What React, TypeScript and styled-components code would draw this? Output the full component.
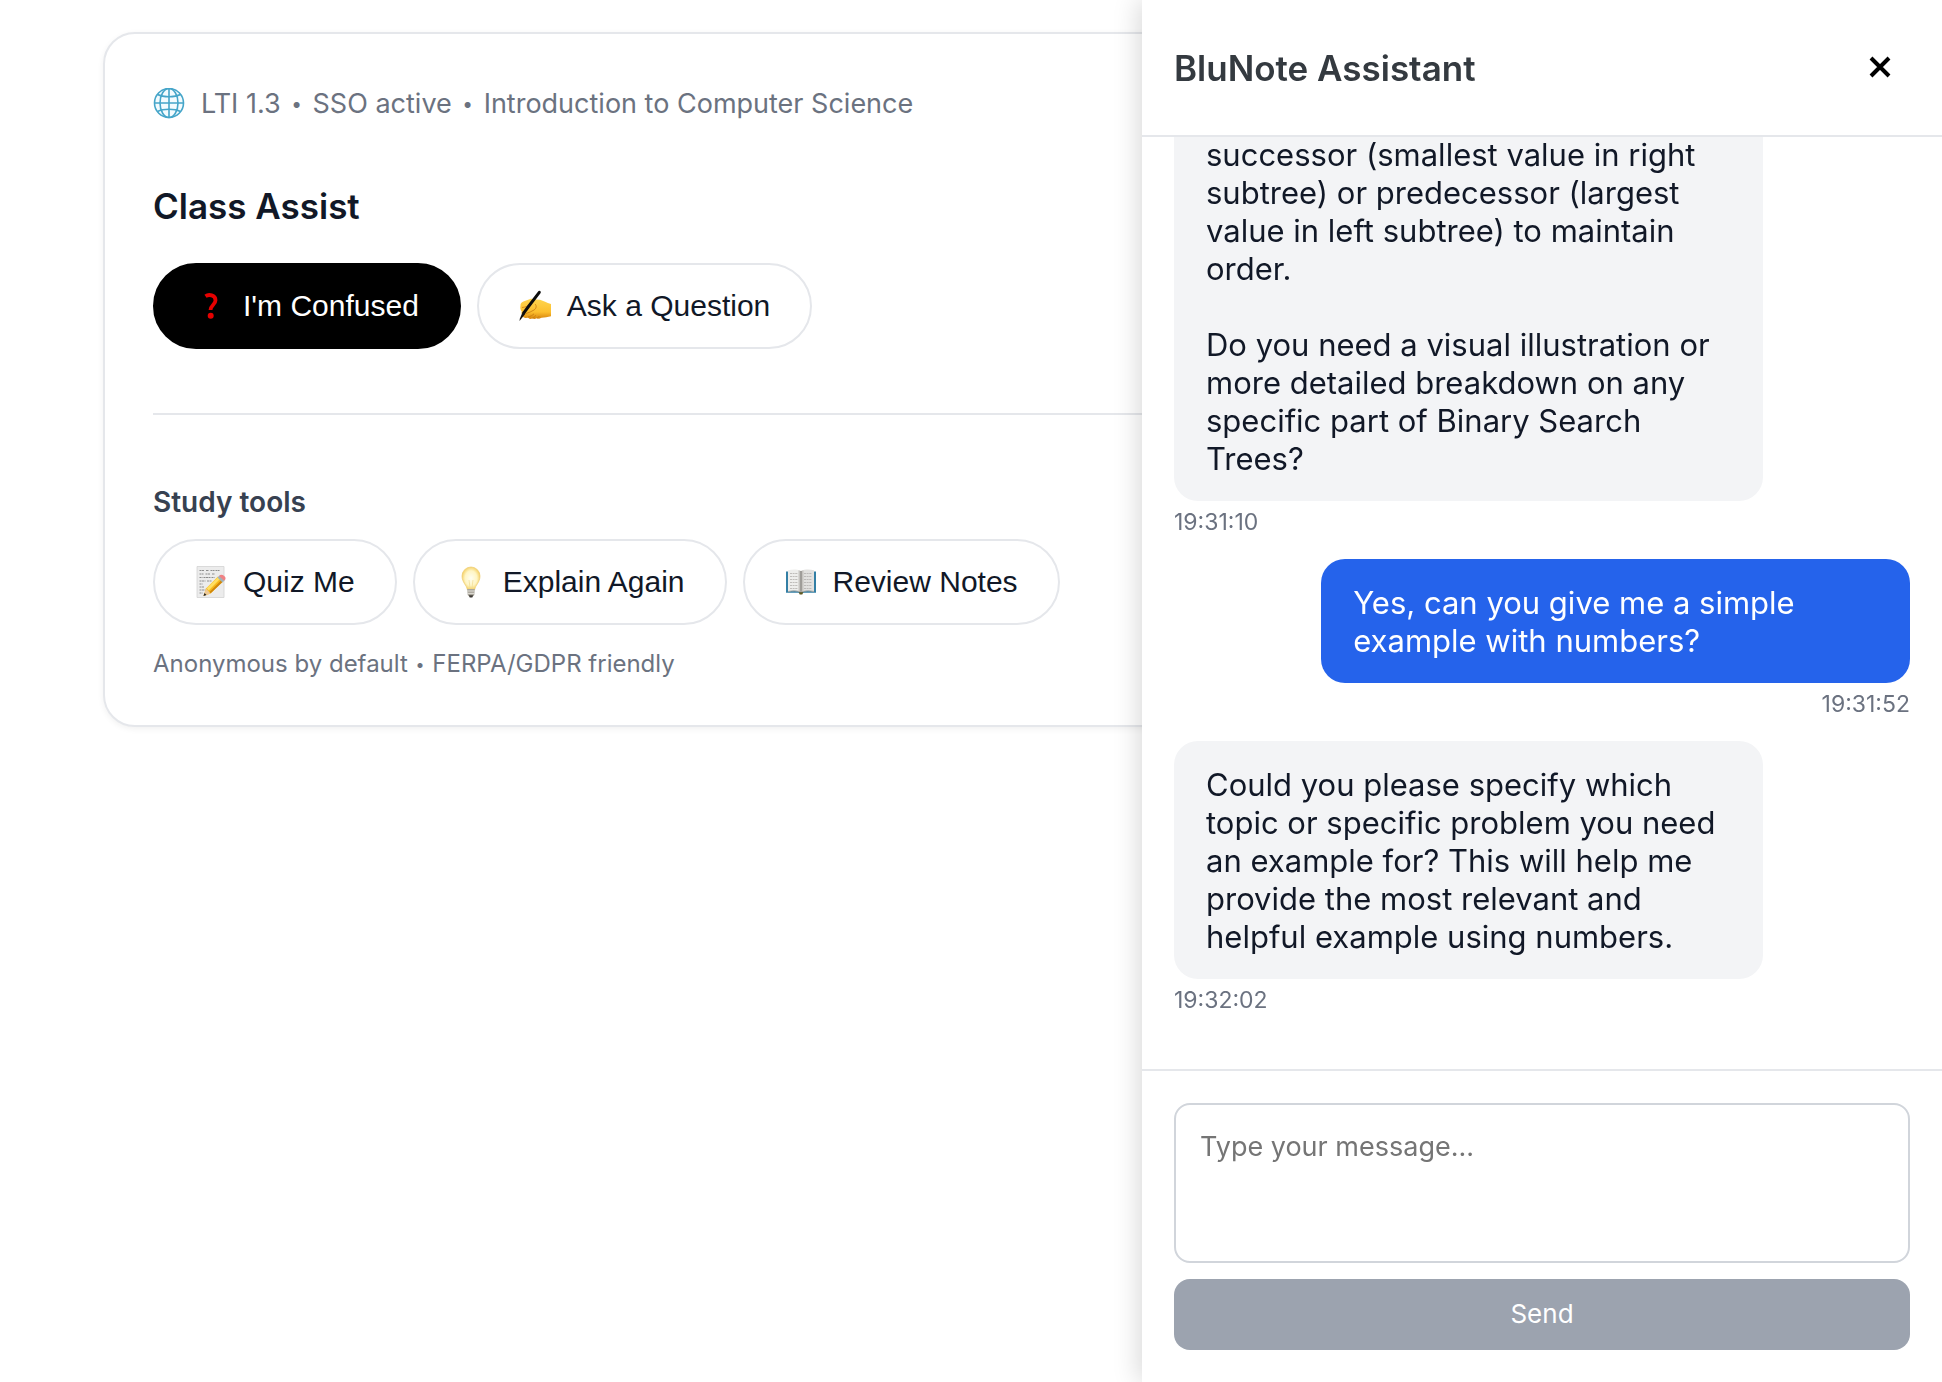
import React from "react";
import styled, { createGlobalStyle } from "styled-components";

const GlobalStyle = createGlobalStyle`
  *, *::before, *::after { box-sizing: border-box; }
  body {
    margin: 0;
    background: #ffffff;
    color: #111827;
    font-family: Inter, "Liberation Sans", sans-serif;
  }
  h1, h2, h3, p { margin: 0; }
`;

const Page = styled.main`
  padding: 32px 103px;
`;

const Card = styled.section`
  display: flex;
  flex-direction: column;
  padding: 48px 48px 46px;
  border: 2px solid #e5e7eb;
  border-radius: 32px;
  background: #ffffff;
  box-shadow: 0 2px 6px rgba(0, 0, 0, 0.06);
`;

const CourseLine = styled.p`
  display: flex;
  align-items: center;
  gap: 16px;
  margin-bottom: 56px;
  font-size: 27px;
  line-height: 44px;
  color: #6b7280;
`;

const Dot = styled.span<{ $small?: boolean }>`
  margin: 0 ${(p) => (p.$small ? 1 : 3)}px;
  font-size: ${(p) => (p.$small ? 16 : 19)}px;
  line-height: 1;
  vertical-align: 2px;
`;

const CardTitle = styled.h1`
  margin-bottom: 32px;
  font-size: 35px;
  line-height: 49px;
  font-weight: 600;
  color: #111827;
`;

const SectionTitle = styled.h2`
  margin-bottom: 14px;
  font-size: 28px;
  line-height: 46px;
  font-weight: 600;
  color: #374151;
`;

const ButtonRow = styled.div`
  display: flex;
  flex-wrap: wrap;
  gap: 16px;
`;

const PillButton = styled.button<{ $primary?: boolean }>`
  display: inline-flex;
  align-items: center;
  gap: 16px;
  padding: 24px 40px;
  border: 2px solid ${(p) => (p.$primary ? "#000000" : "#e5e7eb")};
  border-radius: 43px;
  background: ${(p) => (p.$primary ? "#000000" : "#ffffff")};
  color: ${(p) => (p.$primary ? "#ffffff" : "#111827")};
  font-family: "Liberation Sans", Arial, sans-serif;
  font-size: 30px;
  line-height: 34px;
  cursor: pointer;
`;

const Glyph = styled.svg`
  display: block;
  flex: none;
  width: 32px;
  height: 32px;
`;

const Divider = styled.hr`
  width: 100%;
  height: 2px;
  margin: 64px 0;
  border: 0;
  background: #e5e7eb;
`;

const Note = styled.p`
  margin-top: 24px;
  font-size: 24px;
  line-height: 30px;
  color: #6b7280;
`;

const Drawer = styled.aside`
  position: fixed;
  top: 0;
  right: 0;
  bottom: 0;
  display: flex;
  flex-direction: column;
  width: 800px;
  max-width: 100%;
  background: #ffffff;
  box-shadow: -4px 0 24px rgba(0, 0, 0, 0.15);
`;

const DrawerHeader = styled.header`
  display: flex;
  align-items: flex-start;
  justify-content: space-between;
  padding: 32px 32px 30px;
  border-bottom: 2px solid #e5e7eb;
`;

const DrawerTitle = styled.h2`
  font-size: 35px;
  line-height: 73px;
  font-weight: 600;
  color: #343a40;
`;

const CloseButton = styled.button`
  display: flex;
  align-items: center;
  justify-content: center;
  width: 60px;
  height: 70px;
  padding: 0;
  border: 0;
  background: transparent;
  color: #000000;
  cursor: pointer;
`;

const Messages = styled.div`
  display: flex;
  flex: 1;
  flex-direction: column;
  justify-content: flex-end;
  gap: 24px;
  min-height: 0;
  padding: 32px 32px 56px;
  overflow: hidden;
`;

const Message = styled.article<{ $mine?: boolean }>`
  display: flex;
  flex: none;
  flex-direction: column;
  align-items: ${(p) => (p.$mine ? "flex-end" : "flex-start")};
  gap: 8px;
`;

const Bubble = styled.div<{ $mine?: boolean }>`
  width: 80%;
  padding: 25px 32px 23px;
  border-radius: 24px;
  background: ${(p) => (p.$mine ? "#2563eb" : "#f3f4f6")};
  color: ${(p) => (p.$mine ? "#ffffff" : "#111827")};
  font-size: 31px;
  line-height: 38px;
  white-space: pre-line;
`;

const Time = styled.time`
  font-size: 23px;
  line-height: 26px;
  color: #6b7280;
`;

const Composer = styled.form`
  display: flex;
  flex-direction: column;
  gap: 16px;
  padding: 32px;
  border-top: 2px solid #e5e7eb;
`;

const MessageInput = styled.textarea`
  display: block;
  width: 100%;
  height: 160px;
  padding: 24px;
  border: 2px solid #d1d5db;
  border-radius: 16px;
  background: #ffffff;
  color: #111827;
  font-family: inherit;
  font-size: 27px;
  line-height: 36px;
  resize: none;

  &::placeholder { color: #757575; opacity: 1; }
`;

const SendButton = styled.button`
  padding: 19px 20px 21px;
  border: 0;
  border-radius: 16px;
  background: #9ca3af;
  color: #ffffff;
  font-family: inherit;
  font-size: 26px;
  line-height: 31px;
`;

const GlobeIcon = () => (
  <Glyph viewBox="0 0 32 32" fill="none" stroke="#45a5c9" strokeWidth="1.6" aria-hidden="true">
    <circle cx="16" cy="15" r="14.5" fill="#f3fbfe" />
    <ellipse cx="16" cy="15" rx="9" ry="14.5" />
    <path d="M16 .5v29M1.500 15h29" />
    <path d="M4.500 6.500c3.200 1.600 7 2.200 11.500 2.200s8.300-.6 11.500-2.200M4.500 23.500c3.200-1.600 7-2.200 11.500-2.200s8.300.6 11.500 2.200" />
  </Glyph>
);

const QuestionIcon = () => (
  <Glyph viewBox="0 0 32 32" aria-hidden="true">
    <path d="M10.500 6.200c3.200-2.200 10-1.300 10 4 0 4.600-5 5-5 9.800" fill="none" stroke="#e60000" strokeWidth="3.800" />
    <circle cx="15.700" cy="25.700" r="3" fill="#e60000" />
  </Glyph>
);

const WritingHandIcon = () => (
  <Glyph viewBox="0 0 32 32" aria-hidden="true">
    <defs>
      <linearGradient id="skin" x1="0" y1="0" x2="0" y2="1">
        <stop offset="0" stopColor="#ffd54f" />
        <stop offset="0.650" stopColor="#fcbf2e" />
        <stop offset="1" stopColor="#d5820c" />
      </linearGradient>
    </defs>
    <path
      d="M1.500 15.500C1.300 13.300 2.500 12.300 5 11.300l5.500-2.100c2-.7 4.500-.4 6.500.3l4 .3c3.500.8 6.500 3.400 11 4.200v12.200c-3.500.8-6 1.200-9.500 1.600l-2.500.9-2.200-.5-2.300.9-2.200-.7-2.300.5-2-1.100-2.700.2c-2-.3-2.800-1.500-2.300-3-1.500-.8-2-2-1.200-3.600-1.500-1.500-1.800-3.900-1.300-5.900z"
      fill="url(#skin)"
    />
    <path
      d="M3 17.500c3.500-.3 6-1.300 8.500-3.500M16 14c1.800 1.500 1.500 4.500-1 6-2.500 1.300-5 2.800-8 3.500M9 27c2.500-.6 4.500-1.700 6-3.200M13.500 28c1.500-.7 2.500-1.500 3.500-2.700M18 28.300c1-.5 1.700-1.200 2.300-2.200"
      fill="none"
      stroke="#c67a12"
      strokeWidth="0.800"
    />
    <path d="M20.300 2.300L9.500 16.500 5 22.700" fill="none" stroke="#0c0c0c" strokeWidth="3" strokeLinecap="round" />
    <path d="M3.800 21.800l2.600 1.900L1.900 29.300.5 31l.4-2.600z" fill="#111111" />
  </Glyph>
);

const MemoIcon = () => (
  <Glyph viewBox="0 0 32 32" aria-hidden="true">
    <path d="M2 .500h27v31H2z" fill="#ececec" stroke="#d3d3d3" strokeWidth="0.800" />
    <path
      d="M4.500 4.500h5m1.500 0h3m1.500 0h4m1 0h4M4.500 8h4m2 0h5m1.500 0h3M4.500 11.500h3m1 0h7m1 0h3M4.500 15h6m1.500 0h5M4.500 18h3M4.500 21h5M4.500 24h6M4.500 27h3"
      stroke="#8d8d8d"
      strokeWidth="1.100"
      strokeDasharray="2 .5"
    />
    <path d="M8.500 30L11 22.500l12-12 5 5-12.500 12z" fill="#f8b91c" />
    <path d="M11.700 22.300L23 11l2 2-11.300 11.500z" fill="#ffdf62" />
    <path d="M15.700 27.200L28 15.500l-1.500-1.500L14.500 25.900z" fill="#cf860d" />
    <path d="M8.500 30L11 22.500l4.500 5z" fill="#edc996" />
    <path d="M8.500 30l1-3 2 2z" fill="#222222" />
    <path d="M22.500 11.500l2-2 5 5-2 2z" fill="#9fb3bb" />
    <path d="M24 10c1.500-1.800 3.500-1.500 5.200 0s2 2.900 0 4.800z" fill="#ef8284" />
  </Glyph>
);

const BulbIcon = () => (
  <Glyph viewBox="0 0 32 32" aria-hidden="true">
    <defs>
      <radialGradient id="bulb" cx="0.500" cy="0.500" r="0.550">
        <stop offset="0" stopColor="#fffef0" />
        <stop offset="0.600" stopColor="#fff5c4" />
        <stop offset="1" stopColor="#f3ca55" />
      </radialGradient>
    </defs>
    <path d="M12.200 23.500c-.2-4-5.200-7-5.200-13.500a9 9 0 0 1 18 0c0 6.500-5 9.500-5.200 13.500z" fill="url(#bulb)" stroke="#eccb70" strokeWidth="0.700" />
    <path d="M14 14l1.200 9M18 14l-1.200 9" stroke="#eed783" strokeWidth="0.600" />
    <path d="M12.200 23h7.600l-.5 6-1.500 1.500h-3.600L12.700 29z" fill="#aba79d" />
    <path d="M12.500 25h7M12.800 27.400h6.400" stroke="#e7e5df" strokeWidth="0.900" />
    <path d="M13.700 29.300h4.600L17.300 31.500h-2.600z" fill="#3e3b36" />
  </Glyph>
);

const BookIcon = () => (
  <Glyph viewBox="0 0 32 32" aria-hidden="true">
    <path d="M1 5.500h30v21.300H18.500L16 28l-2.500-1.200H1z" fill="#337fa5" />
    <path d="M3 4.300c4.500-1 9.500-1 13 .7v21c-4-1.500-8.500-1.500-13-.6z" fill="#eeeeec" />
    <path d="M29 4.300c-4.500-1-9.500-1-13 .7v21c4-1.500 8.500-1.500 13-.6z" fill="#e2e1df" />
    <path d="M13.500 4.200L16 5l2.500-.8v21L16 26l-2.500-.8z" fill="#c6c4c0" />
    <path d="M16 5v21" stroke="#706e69" strokeWidth="0.900" />
    <path
      d="M5 7.500h8M5 10.500h8M5 13.500h8M5 16.500h8M5 19.500h8M5 22.500h8M19 7.500h8M19 10.500h8M19 13.500h8M19 16.500h8M19 19.500h8M19 22.500h8"
      stroke="#b3b0ad"
      strokeWidth="0.800"
      strokeDasharray="2 .6"
    />
    <path d="M3 25.500c4.500-.9 9-.9 13 .6 4-1.500 8.500-1.500 13-.6" fill="none" stroke="#a9a7a2" strokeWidth="1" />
    <path d="M13.700 26.300h4.600l-1 2.100h-2.600z" fill="#63591f" />
  </Glyph>
);

const CloseIcon = () => (
  <svg width="22" height="22" viewBox="0 0 22 22" fill="none" stroke="currentColor" strokeWidth="4" aria-hidden="true">
    <path d="M2 2l18 18M20 2L2 20" />
  </svg>
);

const studyTools = [
  { label: "Quiz Me", Icon: MemoIcon },
  { label: "Explain Again", Icon: BulbIcon },
  { label: "Review Notes", Icon: BookIcon },
];

const messages = [
  {
    time: "19:31:10",
    mine: false,
    text:
      "successor (smallest value in right subtree) or predecessor (largest value in left subtree) to maintain order.\n\nDo you need a visual illustration or more detailed breakdown on any specific part of Binary Search Trees?",
  },
  { time: "19:31:52", mine: true, text: "Yes, can you give me a simple example with numbers?" },
  {
    time: "19:32:02",
    mine: false,
    text:
      "Could you please specify which topic or specific problem you need an example for? This will help me provide the most relevant and helpful example using numbers.",
  },
];

export default function App() {
  return (
    <>
      <GlobalStyle />
      <Page>
        <Card>
          <CourseLine>
            <GlobeIcon />
            <span>
              LTI 1.3 <Dot>•</Dot> SSO active <Dot>•</Dot> Introduction to Computer Science
            </span>
          </CourseLine>
          <CardTitle>Class Assist</CardTitle>
          <ButtonRow>
            <PillButton type="button" $primary>
              <QuestionIcon />
              I'm Confused
            </PillButton>
            <PillButton type="button">
              <WritingHandIcon />
              Ask a Question
            </PillButton>
          </ButtonRow>
          <Divider />
          <SectionTitle>Study tools</SectionTitle>
          <ButtonRow>
            {studyTools.map(({ label, Icon }) => (
              <PillButton type="button" key={label}>
                <Icon />
                {label}
              </PillButton>
            ))}
          </ButtonRow>
          <Note>
            Anonymous by default <Dot $small>•</Dot> FERPA/GDPR friendly
          </Note>
        </Card>
      </Page>
      <Drawer aria-label="BluNote Assistant">
        <DrawerHeader>
          <DrawerTitle>BluNote Assistant</DrawerTitle>
          <CloseButton type="button" aria-label="Close">
            <CloseIcon />
          </CloseButton>
        </DrawerHeader>
        <Messages>
          {messages.map((m) => (
            <Message key={m.time} $mine={m.mine}>
              <Bubble $mine={m.mine}>{m.text}</Bubble>
              <Time>{m.time}</Time>
            </Message>
          ))}
        </Messages>
        <Composer onSubmit={(e) => e.preventDefault()}>
          <MessageInput aria-label="Message" placeholder="Type your message..." />
          <SendButton type="submit">Send</SendButton>
        </Composer>
      </Drawer>
    </>
  );
}
